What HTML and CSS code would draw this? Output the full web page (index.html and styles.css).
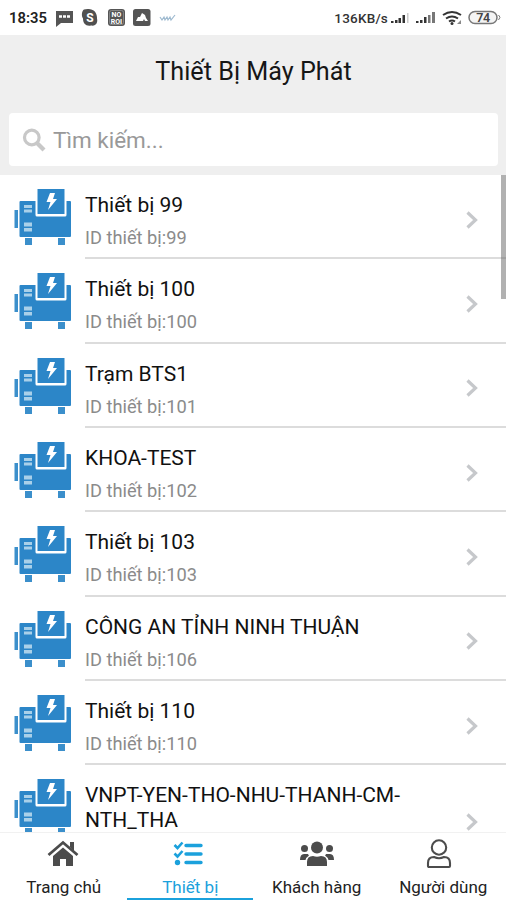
FILE: index.html
```
<!DOCTYPE html>
<html lang="vi">
<head>
<meta charset="utf-8">
<title>Thiết Bị Máy Phát</title>
<link rel="stylesheet" href="styles.css">
</head>
<body>
<svg class="defs" aria-hidden="true">
  <symbol id="generator" viewBox="0 0 60 60">
    <path fill="#3b8fcb" d="M1.500 23h3.500v18h-3.500zM12 51h7v7h-7zM45 51h7v7h-7z"/>
    <path fill="#2c86c8" d="M7.500 14h49.500q1 0 1 1v34q0 1-1 1h-49.500q-1 0-1-1v-34q0-1 1-1z"/>
    <path fill="#fff" d="M22.500 12h31v16q0 1.500-1.500 1.500h-28q-1.500 0-1.500-1.500z"/>
    <path fill="#2c86c8" d="M24.500 2h27v25h-27z"/>
    <path fill="#a9d0e9" d="M11 18h8v3h-8zM11 22.500h8v3h-8zM11 35.500h8v4h-8zM11 41h8v3.500h-8z"/>
    <path fill="#fff" d="M37 6h5l-2 6h4l-9 11 2.500-8h-4z"/>
  </symbol>
  <symbol id="chevron" viewBox="0 0 12 18"><path d="M1.500 1.500 9.500 9l-8 7.500" fill="none" stroke="#c6c8cb" stroke-width="3.200"/></symbol>
</svg>
<div class="screen">
  <div class="status">
    <span class="clock">18:35</span>
    <svg class="notices" width="125" height="20" viewBox="0 0 125 20">
      <path fill="#555" d="M1 3h17v12H6l-5 4z"/><path stroke="#fff" stroke-width="2.500" stroke-dasharray="3 1" d="M4 8.500h11"/>
      <path fill="#505050" d="M29 1.500c3-1 10-1 12 4 1 2 1 4 1 5 1 4-1 8-6 7-5 1-8-2-8-7-2-3-1-8 1-9z"/><text x="35" y="14" class="glyph skype">S</text>
      <rect x="53" y="1" width="17" height="17" rx="3" fill="#555"/><rect x="54.500" y="2.500" width="14" height="14" rx="2" fill="none" stroke="#999" stroke-width=".7"/><text x="61.500" y="9" class="glyph tiny">NO</text><text x="61.500" y="15.500" class="glyph tiny">ROI</text>
      <rect x="78" y="1" width="17.500" height="17" rx="2.500" fill="#555"/><path fill="#fff" d="m81 13 2-4h2l2-4 3 2 1 3 2 3h-3l-1-2-1 2z"/>
      <path d="m105 9 2 3 2-3 1 3 2-3 1 3 2-3 1 3 4-5" fill="none" stroke="#9db9cf" stroke-width="1.200"/>
    </svg>
    <span class="rate">136KB/s</span>
    <svg class="signals" width="114" height="20" viewBox="0 0 114 20">
      <path fill="#333" d="M0 13h2.500v2H0zM4 12h2.500v3H4zM7.500 10h2.500v5H7.500zM11.500 7h2.500v8h-2.500z"/><path fill="#ccc" d="M16 5h1.500v10H16z"/>
      <path fill="#333" d="M25 13h2.500v2H25zM29 12h2.500v3H29zM33 9h2.500v6H33z"/><path fill="#777" d="M37 7h2.500v8H37zM41 4h3v11h-3z"/>
      <g fill="none" stroke="#333" stroke-width="2"><path d="M52 7q9-6 18 0M55 10.500q6-4 12 0M58 13.500q3-2 6 0"/></g><circle cx="61" cy="15.500" r="1.500" fill="#333"/><path fill="#888" d="m66 16 4-4v4z"/>
      <rect x="78" y="3.500" width="28" height="12" rx="6" fill="#f4f4f4" stroke="#777" stroke-width="1.500"/><path d="M107.500 7q3 2 0 5" fill="none" stroke="#777"/><text x="92" y="13.700" class="battery">74</text>
    </svg>
  </div>
  <header class="header">
    <h1 class="title">Thiết Bị Máy Phát</h1>
    <div class="search">
      <svg width="24" height="24" viewBox="0 0 24 24" fill="none" stroke="#c8c8c8"><circle cx="9.800" cy="9.500" r="7.300" stroke-width="3.200"/><path d="m15 15 7 7" stroke-width="4.200"/></svg>
      <span>Tìm kiếm...</span>
    </div>
  </header>
  <main class="list">
    <div class="row"><svg class="gen"><use href="#generator"/></svg><div class="body"><div class="text"><div class="name">Thiết bị 99</div><div class="id">ID thiết bị:99</div></div><svg class="chev"><use href="#chevron"/></svg></div></div>
    <div class="row"><svg class="gen"><use href="#generator"/></svg><div class="body"><div class="text"><div class="name">Thiết bị 100</div><div class="id">ID thiết bị:100</div></div><svg class="chev"><use href="#chevron"/></svg></div></div>
    <div class="row"><svg class="gen"><use href="#generator"/></svg><div class="body"><div class="text"><div class="name">Trạm BTS1</div><div class="id">ID thiết bị:101</div></div><svg class="chev"><use href="#chevron"/></svg></div></div>
    <div class="row"><svg class="gen"><use href="#generator"/></svg><div class="body"><div class="text"><div class="name">KHOA-TEST</div><div class="id">ID thiết bị:102</div></div><svg class="chev"><use href="#chevron"/></svg></div></div>
    <div class="row"><svg class="gen"><use href="#generator"/></svg><div class="body"><div class="text"><div class="name">Thiết bị 103</div><div class="id">ID thiết bị:103</div></div><svg class="chev"><use href="#chevron"/></svg></div></div>
    <div class="row"><svg class="gen"><use href="#generator"/></svg><div class="body"><div class="text"><div class="name">CÔNG AN TỈNH NINH THUẬN</div><div class="id">ID thiết bị:106</div></div><svg class="chev"><use href="#chevron"/></svg></div></div>
    <div class="row"><svg class="gen"><use href="#generator"/></svg><div class="body"><div class="text"><div class="name">Thiết bị 110</div><div class="id">ID thiết bị:110</div></div><svg class="chev"><use href="#chevron"/></svg></div></div>
    <div class="row tall"><svg class="gen"><use href="#generator"/></svg><div class="body"><div class="text"><div class="name">VNPT-YEN-THO-NHU-THANH-CM-<br>NTH_THA</div></div><svg class="chev"><use href="#chevron"/></svg></div></div>
    <div class="scrollbar"></div>
  </main>
  <nav class="tabs">
    <div class="tab">
      <svg width="32" height="28" viewBox="0 0 32 28"><path fill="#4c4c4c" d="M23 2h4v9l-4-4zM6 16 16 7.500l10 8.500v10h-7v-7h-6v7H6z"/><path d="M1.500 15 16 2.500 30.500 15" fill="none" stroke="#4c4c4c" stroke-width="2.800"/></svg>
      <span>Trang chủ</span>
    </div>
    <div class="tab active">
      <svg class="checks" width="32" height="28" viewBox="0 0 32 28" stroke="#1ba1dc" fill="none"><path d="M13 5.500H28M13 14H28M13 22.500H28" stroke-width="3.400" stroke-linecap="round"/><path d="m1.500 5 3 3 5-5.500M1.500 13.500l3 3 5-5.500" stroke-width="2.600"/><circle cx="4.500" cy="22.500" r="2.700" fill="#1ba1dc" stroke="none"/></svg>
      <span>Thiết bị</span>
    </div>
    <div class="tab">
      <svg class="people" width="36" height="28" viewBox="0 0 36 28" fill="#4c4c4c"><circle cx="18" cy="7.500" r="6"/><circle cx="5.500" cy="8.500" r="3.500"/><circle cx="30.500" cy="8.500" r="3.500"/><path d="M8 26v-4q0-6 6-6 4 1.500 8 0 6 0 6 6v4zM1 20q0-6 4-6h4q.5 1 1 1.500-3 2-3.500 4.500zM35 20q0-6-4-6h-4q-.5 1-1 1.500 3 2 3.500 4.500z"/></svg>
      <span>Khách hàng</span>
    </div>
    <div class="tab">
      <svg class="person" width="28" height="30" viewBox="0 0 28 30" fill="none" stroke="#4c4c4c" stroke-width="2.100"><circle cx="14" cy="8.500" r="7.200"/><path d="M3 27v-3q0-6 6-6 5 2.500 10 0 6 0 6 6v3q0 1-1 1H4q-1 0-1-1z" stroke-linejoin="round"/></svg>
      <span>Người dùng</span>
    </div>
  </nav>
</div>
</body>
</html>
```
FILE: styles.css
```
* { box-sizing: border-box; }
body { margin: 0; font-family: Roboto, "Noto Sans", sans-serif; background: #fff; }
svg { display: block; flex: none; }
.defs { display: none; }
.screen { width: 506px; height: 900px; display: flex; flex-direction: column; overflow: hidden; }
.status { height: 35px; flex: none; display: flex; align-items: center; padding-left: 9px; }
.clock { width: 46px; font-size: 14.8px; font-weight: 600; color: #222; }
.notices { margin-top: 1px; }
.rate { margin-left: auto; font-size: 13.5px; font-weight: 500; color: #333; letter-spacing: .2px; }
.signals { margin-left: 3px; margin-right: 1px; }
.glyph { fill: #fff; font-size: 12px; font-weight: 700; text-anchor: middle; }
.tiny { font-size: 7px; }
.battery { font-size: 12.5px; font-weight: 600; text-anchor: middle; fill: #444; letter-spacing: -.5px; }
.header { height: 140px; flex: none; background: #efefef; padding: 0 8px 0 9px; }
.title { margin: 0; height: 78px; line-height: 73px; text-align: center; font-size: 25.200px; font-weight: 400; color: #161616; }
.search { height: 53px; background: #fff; border-radius: 4px; display: flex; align-items: center; gap: 7px; padding-left: 13px; font-size: 22.500px; color: #999; }
.list { flex: 1; min-height: 0; overflow: hidden; position: relative; }
.row { display: flex; height: 84.35px; padding-left: 13px; }
.tall { height: 109px; }
.gen { width: 60px; height: 60px; margin-top: 12px; }
.body { flex: 1; margin-left: 12px; border-bottom: 2px solid #dcdcdc; display: flex; justify-content: space-between; padding-right: 28px; }
.text { padding-top: 18px; }
.name { font-size: 21px; line-height: 25px; color: #111; white-space: nowrap; }
.id { margin-top: 8px; font-size: 18.250px; line-height: 24px; color: #8b8b8b; }
.chev { width: 12px; height: 18px; margin-top: 35.600px; }
.tall .chev { margin-top: 48px; }
.scrollbar { position: absolute; top: 0; right: 0; width: 5px; height: 124px; background: rgba(100, 100, 100, .5); }
.tabs { height: 68px; flex: none; display: flex; border-top: 1px solid #f1f1f1; background: #fff; }
.tab { flex: 1; display: flex; flex-direction: column; align-items: center; border-bottom: 2px solid transparent; padding-top: 7px; font-size: 17px; color: #222; }
.tab span { margin-top: auto; line-height: 22px; padding-left: 1px; }
.checks { margin-right: 2px; }
.people { margin-left: 2px; }
.person { margin-right: 8px; margin-top: -1px; }
.active { color: #1ba1dc; border-color: #1ba1dc; }
```
